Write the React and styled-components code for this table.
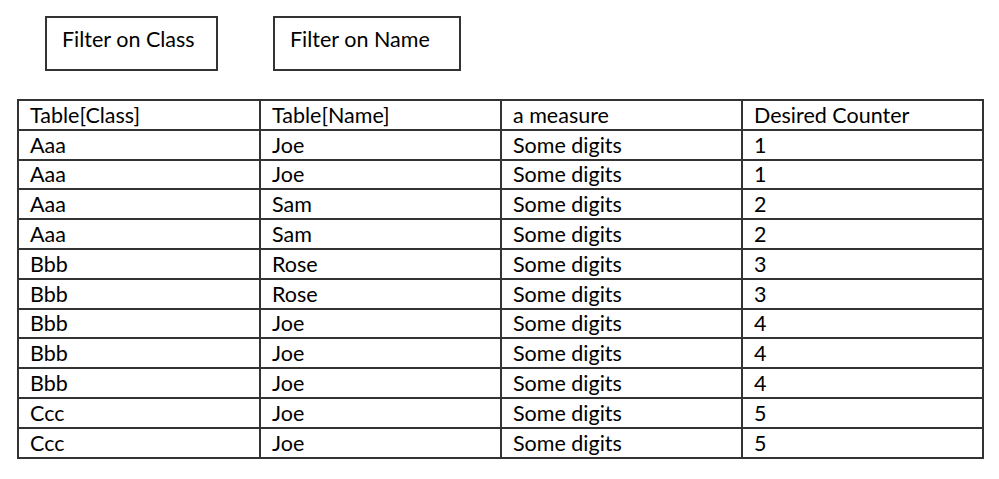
import React from "react";
import styled, { createGlobalStyle } from "styled-components";

const GlobalStyle = createGlobalStyle`
  body {
    margin: 0;
    background: #fff;
    font-family: Lato, "Liberation Sans", sans-serif;
    color: #000;
  }
`;

const Page = styled.div`
  width: 999px;
  height: 479px;
  box-sizing: border-box;
  padding-top: 16px;
`;

const FilterBar = styled.div`
  display: flex;
  gap: 55px;
  padding-left: 45px;
`;

const FilterBox = styled.div`
  box-sizing: border-box;
  width: ${p => p.w}px;
  height: 55px;
  border: 2px solid #333;
  padding: 7px 0 0 15px;
  font-size: 21.5px;
  line-height: 28px;
`;

const Grid = styled.table`
  margin: 28px 0 0 17px;
  width: 965px;
  border-collapse: collapse;
  table-layout: fixed;
  font-size: 21.5px;
`;

const Cell = styled.td`
  height: 29.8px;
  box-sizing: border-box;
  border: 2px solid #333;
  padding: 0 0 0 11px;
  line-height: 26px;
  white-space: nowrap;
`;

const headers = ["Table[Class]", "Table[Name]", "a measure", "Desired Counter"];

const rows = [
  ["Aaa", "Joe", 1],
  ["Aaa", "Joe", 1],
  ["Aaa", "Sam", 2],
  ["Aaa", "Sam", 2],
  ["Bbb", "Rose", 3],
  ["Bbb", "Rose", 3],
  ["Bbb", "Joe", 4],
  ["Bbb", "Joe", 4],
  ["Bbb", "Joe", 4],
  ["Ccc", "Joe", 5],
  ["Ccc", "Joe", 5],
];

export default function App() {
  return (
    <Page>
      <GlobalStyle />
      <FilterBar>
        <FilterBox w={173}>Filter on Class</FilterBox>
        <FilterBox w={188}>Filter on Name</FilterBox>
      </FilterBar>
      <Grid>
        <colgroup>
          <col style={{ width: 242 }} />
          <col style={{ width: 241 }} />
          <col style={{ width: 241 }} />
          <col style={{ width: 241 }} />
        </colgroup>
        <tbody>
          <tr>
            {headers.map(h => <Cell key={h}>{h}</Cell>)}
          </tr>
          {rows.map((r, i) => (
            <tr key={i}>
              <Cell>{r[0]}</Cell>
              <Cell>{r[1]}</Cell>
              <Cell>Some digits</Cell>
              <Cell>{r[2]}</Cell>
            </tr>
          ))}
        </tbody>
      </Grid>
    </Page>
  );
}
